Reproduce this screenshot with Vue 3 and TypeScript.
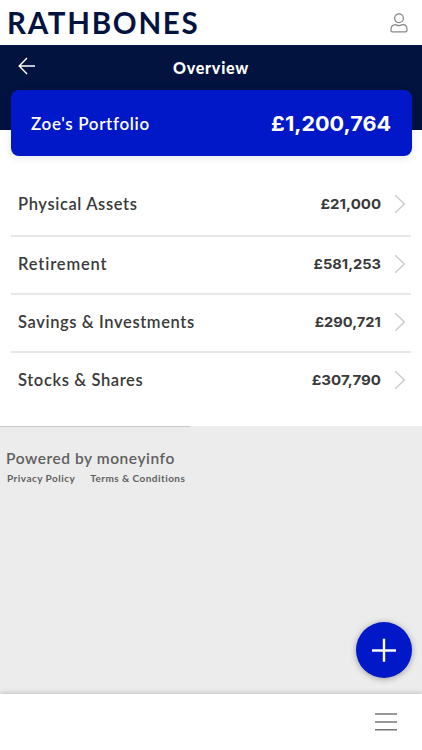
<script setup lang="ts">
interface Holding {
  name: string
  value: string
  key: string
}

const holdings: Holding[] = [
  { name: 'Physical Assets', value: '£21,000', key: 'physical' },
  { name: 'Retirement', value: '£581,253', key: 'retirement' },
  { name: 'Savings & Investments', value: '£290,721', key: 'savings' },
  { name: 'Stocks & Shares', value: '£307,790', key: 'stocks' },
]
</script>

<template>
  <div class="app">
    <header class="brand">
      <span class="logo">RATHBONES</span>
      <svg class="user" width="18" height="20" viewBox="0 0 18 20">
        <circle cx="9" cy="5.3" r="4.4" />
        <path d="M1 18.5V16.4C1 13.6 2.6 11.7 5.2 11.7C6.7 11.7 7.2 12.6 9 12.6S11.3 11.7 12.8 11.7C15.4 11.7 17 13.6 17 16.4V17.6Q17 18.9 15.7 18.9H2.3Q1 18.9 1 17.6Z" />
      </svg>
    </header>

    <div class="titlebar">
      <svg class="back" width="18" height="18" viewBox="0 0 18 18">
        <path d="M17 9H1.2M9 1L1.2 9L9 17" />
      </svg>
      <h1 class="title">Overview</h1>
    </div>

    <main class="content">
      <section class="portfolio">
        <span class="portfolio-name">Zoe's Portfolio</span>
        <span class="portfolio-value">£1,200,764</span>
      </section>
      <ul class="list">
        <li v-for="h in holdings" :key="h.key" class="row" :class="h.key">
          <span class="name">{{ h.name }}</span>
          <span class="value">{{ h.value }}</span>
          <svg class="chevron" width="12" height="20" viewBox="0 0 12 20">
            <path d="M1.2 1.3L10.4 10L1.2 18.7" />
          </svg>
        </li>
      </ul>
    </main>

    <footer class="footer">
      <div class="rule"></div>
      <div class="powered">Powered by moneyinfo</div>
      <div class="links">
        <span class="privacy">Privacy Policy</span>
        <span class="terms">Terms &amp; Conditions</span>
      </div>
    </footer>

    <nav class="bottom">
      <svg width="22" height="18" viewBox="0 0 22 18">
        <path d="M0 1H22M0 9H22M0 16.7H22" />
      </svg>
    </nav>

    <button class="fab" aria-label="Add">
      <svg width="24" height="24" viewBox="0 0 24 24">
        <path d="M0 12.5H24M12 0.8V23.8" />
      </svg>
    </button>
  </div>
</template>

<style>
body {
  margin: 0;
  overflow: hidden;
}
</style>

<style scoped>
.app {
  position: relative;
  display: flex;
  flex-direction: column;
  width: 100%;
  height: 100vh;
  background: #ececec;
  color: #3a3a3a;
  font-family: Lato, 'Open Sans', sans-serif;
  white-space: nowrap;
}
svg {
  display: block;
  fill: none;
}
.brand {
  display: flex;
  align-items: center;
  justify-content: space-between;
  box-sizing: border-box;
  height: 45px;
  padding: 1px 14px 0 7px;
  background: #fff;
}
.logo {
  color: #03133f;
  font-size: 29.5px;
  font-weight: 700;
  line-height: 44px;
  letter-spacing: 1.72px;
}
.user {
  stroke: #858585;
  stroke-width: 1.2;
}
.titlebar {
  display: grid;
  grid-template-columns: 60px 1fr 60px;
  height: 85px;
  background: #03133f;
}
.back {
  margin: 12px 0 0 18px;
  stroke: #fff;
  stroke-width: 1.4;
}
.title {
  margin: 0;
  color: #fff;
  font-size: 16px;
  font-weight: 900;
  line-height: 46px;
  letter-spacing: 0.78px;
  text-align: center;
}
.content {
  height: 296px;
  background: #fff;
}
.portfolio {
  position: relative;
  display: flex;
  align-items: center;
  justify-content: space-between;
  box-sizing: border-box;
  height: 66px;
  margin: -40px 10.5px 0;
  padding: 0 20.5px;
  border-radius: 8px;
  background: #0018c8;
  color: #fff;
  box-shadow: 0 2px 8px rgba(0, 0, 0, 0.1);
}
.portfolio-name {
  padding-top: 1px;
  font-size: 17px;
  font-weight: 600;
  letter-spacing: 0.65px;
}
.portfolio-value {
  padding-top: 2px;
  font-family: Inter, sans-serif;
  font-size: 20px;
  font-weight: 700;
  transform: scaleX(1.08);
  transform-origin: right;
}
.list {
  margin: 16px 11px 0;
  padding: 0;
  list-style: none;
}
.row {
  display: flex;
  align-items: center;
  box-sizing: border-box;
  height: 58px;
  padding: 0 5px 2px 7px;
  border-bottom: 2px solid #e7e7e7;
}
.row:first-child {
  height: 65px;
  padding-top: 3px;
}
.row:last-child {
  height: 56px;
  border-bottom: 0;
}
.name {
  flex: 1;
  font-size: 16.5px;
  font-weight: 600;
  letter-spacing: 0.62px;
}
.retirement .name {
  letter-spacing: 0.85px;
}
.value {
  margin-right: 13px;
  padding-bottom: 1px;
  font-family: Inter, sans-serif;
  font-size: 13.7px;
  font-weight: 700;
  transform: scaleX(1.07);
  transform-origin: right;
}
.physical .value,
.stocks .value {
  transform: scaleX(1.1);
}
.chevron {
  stroke: #c9c9c9;
  stroke-width: 1.3;
}
.footer {
  flex: 1;
  color: #606060;
}
.rule {
  width: 190px;
  height: 1px;
  background: #c9c9c9;
}
.powered {
  margin: 21px 0 0 6px;
  font-size: 15.5px;
  font-weight: 600;
  line-height: 20px;
  letter-spacing: 0.56px;
}
.links {
  display: flex;
  gap: 15px;
  margin: 3px 0 0 7px;
  font-size: 10px;
  font-weight: 700;
  line-height: 14px;
  letter-spacing: 0.46px;
}
.bottom {
  display: flex;
  align-items: center;
  justify-content: flex-end;
  box-sizing: border-box;
  height: 56px;
  padding-right: 25px;
  background: #fff;
  box-shadow: 0 -1px 5px rgba(0, 0, 0, 0.2);
  stroke: #777;
  stroke-width: 1.4;
}
.fab {
  position: absolute;
  right: 10.5px;
  bottom: 71.6px;
  display: flex;
  align-items: center;
  justify-content: center;
  width: 56px;
  height: 56px;
  padding: 0;
  border: 0;
  border-radius: 50%;
  background: #0018c8;
  box-shadow: 0 1px 6px rgba(0, 0, 0, 0.35);
  stroke: #fff;
  stroke-width: 2.4;
}
</style>
